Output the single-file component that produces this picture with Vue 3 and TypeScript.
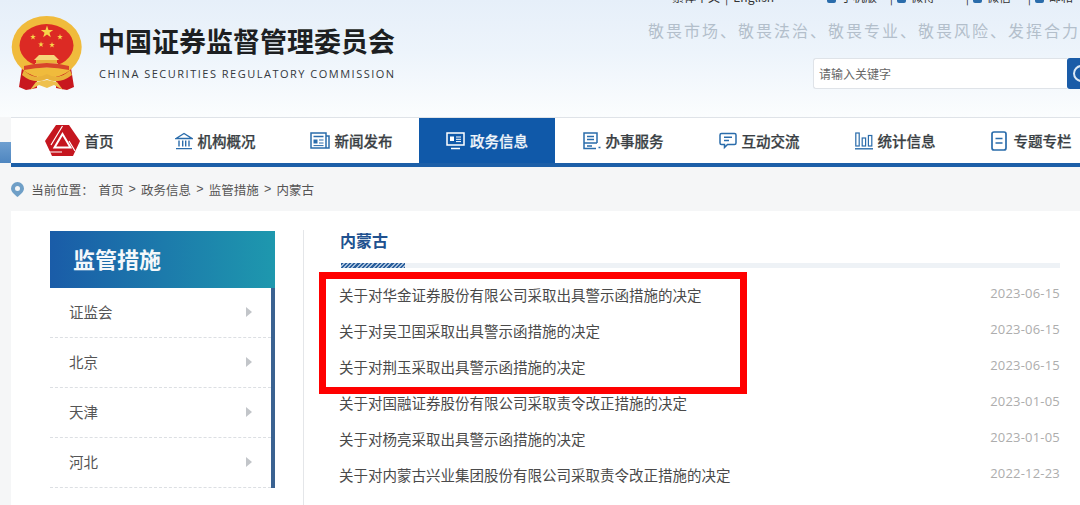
<script setup lang="ts">
interface NavItem {
  label: string
  icon: string
}

const navItems: NavItem[] = [
  { label: '首页', icon: 'logo' },
  { label: '机构概况', icon: 'bank' },
  { label: '新闻发布', icon: 'news' },
  { label: '政务信息', icon: 'screen' },
  { label: '办事服务', icon: 'form' },
  { label: '互动交流', icon: 'chat' },
  { label: '统计信息', icon: 'chart' },
  { label: '专题专栏', icon: 'doc' }
]

const topLinks = [
  { label: '手机版', width: 70 },
  { label: '微博', width: 76 },
  { label: '微信', width: 62 },
  { label: '邮箱', width: 60 }
]

const activeNav = '政务信息'
const crumbs = ['首页', '政务信息', '监管措施', '内蒙古']
const regions = ['证监会', '北京', '天津', '河北']

const notices = [
  { title: '关于对华金证券股份有限公司采取出具警示函措施的决定', date: '2023-06-15' },
  { title: '关于对吴卫国采取出具警示函措施的决定', date: '2023-06-15' },
  { title: '关于对荆玉采取出具警示函措施的决定', date: '2023-06-15' },
  { title: '关于对国融证券股份有限公司采取责令改正措施的决定', date: '2023-01-05' },
  { title: '关于对杨亮采取出具警示函措施的决定', date: '2023-01-05' },
  { title: '关于对内蒙古兴业集团股份有限公司采取责令改正措施的决定', date: '2022-12-23' }
]

const starPoints = (cx: number, cy: number, r: number) => {
  const pts: string[] = []
  for (let i = 0; i < 10; i++) {
    const rad = i % 2 === 0 ? r : r * 0.4
    const a = (Math.PI / 5) * i - Math.PI / 2
    pts.push(`${(cx + rad * Math.cos(a)).toFixed(2)},${(cy + rad * Math.sin(a)).toFixed(2)}`)
  }
  return pts.join(' ')
}
</script>

<template>
  <div class="page">
    <header class="header">
      <svg class="emblem" width="74" height="78" viewBox="10 14 74 78">
        <path d="M22 68 L19 87 L26 90 L37 88 L37 74 Z M71 68 L74 87 L67 90 L56 88 L56 74 Z" fill="#c8171e" />
        <ellipse cx="46.7" cy="47" rx="35" ry="31" fill="#f0bb3c" />
        <ellipse cx="46.5" cy="45.5" rx="27" ry="21.5" fill="#dc2a24" />
        <polygon :points="starPoints(47, 32, 6.5)" fill="#f7d44a" />
        <polygon :points="starPoints(33, 37, 3)" fill="#f7d44a" />
        <polygon :points="starPoints(41, 44.5, 3)" fill="#f7d44a" />
        <polygon :points="starPoints(52, 45, 3)" fill="#f7d44a" />
        <polygon :points="starPoints(60, 37, 3)" fill="#f7d44a" />
        <path d="M39 55 H54 L59 60 H34 Z" fill="#f6d67a" />
        <rect x="36" y="60" width="21" height="3" fill="#e9b23a" />
        <rect x="35" y="63" width="23" height="5" fill="#f3cd68" />
        <path d="M24 66 Q47 60 69 66 L69 70 Q47 65 24 70 Z" fill="#d8452a" />
        <path d="M24 70 Q34 81 47 74 Q59 81 70 70 L72 75 Q59 85 47 79 Q34 85 22 75 Z" fill="#e9b23a" />
        <path d="M30 90 L36 82 L47 80 L57 82 L63 90 L54 85 L47 88 L39 85 Z" fill="#eec04e" />
      </svg>
      <div class="brand">
        <h1 class="brand-cn">中国证券监督管理委员会</h1>
        <p class="brand-en">CHINA SECURITIES REGULATORY COMMISSION</p>
      </div>
      <div class="header-right">
        <div class="top-links">
          <span>繁体中文</span><span>|</span><span>English</span>
          <div class="top-group">
            <span v-for="link in topLinks" :key="link.label" class="top-link" :style="{ width: link.width + 'px' }">
              <i class="top-icon"></i>
              <span>{{ link.label }}</span>
              <span class="top-sep">|</span>
            </span>
          </div>
        </div>
        <p class="slogan">敬畏市场、敬畏法治、敬畏专业、敬畏风险、发挥合力</p>
        <div class="search">
          <div class="search-input">请输入关键字</div>
          <div class="search-btn"><span class="search-ring"></span></div>
        </div>
      </div>
    </header>

    <div class="nav-row">
      <div class="nav-strip"></div>
      <nav class="nav">
        <a v-for="item in navItems" :key="item.label" class="nav-item" :class="{ active: item.label === activeNav }">
          <svg v-if="item.icon === 'logo'" width="35" height="31" viewBox="0 0 35 31">
            <path d="M11 0 H24 L35 16 L28 31 H7 L0 16 Z" fill="#c5161f" />
            <path d="M17.5 9 L25.5 22.5 H9.5 Z" fill="none" stroke="#fff" stroke-width="2" />
            <path d="M17.5 1 L6 20 M24 16 L30 26 M4 27 H17" fill="none" stroke="#fff" stroke-width="1.2" />
          </svg>
          <svg v-else-if="item.icon === 'bank'" width="18" height="18" viewBox="0 0 18 18" fill="none" stroke="#2a6cab" stroke-width="1.4">
            <path d="M1 6.5 L9 1.5 L17 6.5 Z M4 8.5 V14.5 M7.7 8.5 V14.5 M10.7 8.5 V14.5 M14 8.5 V14.5 M1 16.6 H17" />
          </svg>
          <svg v-else-if="item.icon === 'news'" width="20" height="17" viewBox="0 0 20 17" fill="none" stroke="#2a6cab" stroke-width="1.5">
            <path d="M1 1 H16 V16 H1 Z M16 4 H19 V16 H16 M3.5 4.5 H13.5" />
            <rect x="3.5" y="7.5" width="4" height="4" fill="#2a6cab" stroke="none" />
            <path d="M9 8 H13.5 M9 11 H13.5 M3.5 13.6 H13.5" stroke-width="1" />
          </svg>
          <svg v-else-if="item.icon === 'screen'" width="19" height="18" viewBox="0 0 19 18" fill="none" stroke="#fff" stroke-width="1.5">
            <path d="M1 1 H18 V13 H1 Z M5 16.5 H14" />
            <rect x="4" y="4.5" width="4" height="4.5" fill="#fff" stroke="none" />
            <path d="M10 5 H15 M10 7.3 H15 M10 9.6 H15" stroke-width="1" />
          </svg>
          <svg v-else-if="item.icon === 'form'" width="18" height="18" viewBox="0 0 18 18" fill="none" stroke="#2a6cab" stroke-width="1.5">
            <path d="M13 16.5 H1 V1 H14 V11 M1 11 H14 M4 4.6 H11 M4 7.6 H11 M4 14 H9 M15.5 15.5 H17.5" />
          </svg>
          <svg v-else-if="item.icon === 'chat'" width="18" height="18" viewBox="0 0 18 18" fill="none" stroke="#2a6cab" stroke-width="1.5">
            <path d="M2.5 1.5 H15.5 Q17 1.5 17 3 V11 Q17 12.5 15.5 12.5 H8.5 L5.5 15.5 V12.5 H2.5 Q1 12.5 1 11 V3 Q1 1.5 2.5 1.5 Z M5 5.2 H13 M5 8.6 H10" />
          </svg>
          <svg v-else-if="item.icon === 'chart'" width="18" height="18" viewBox="0 0 18 18" fill="none" stroke="#2a6cab" stroke-width="1.2">
            <rect x="0.8" y="1" width="3.4" height="13" />
            <rect x="7.2" y="6" width="3.4" height="8" />
            <rect x="13.4" y="3.5" width="3.4" height="10.5" />
            <path d="M0 16.8 H18" stroke-width="1.4" />
          </svg>
          <svg v-else class="doc-icon" width="16" height="20" viewBox="0 0 16 20" fill="none" stroke="#2a6cab" stroke-width="1.7">
            <path d="M3 1 H13 Q15 1 15 3 V17 Q15 19 13 19 H3 Q1 19 1 17 V3 Q1 1 3 1 Z M4.5 7.5 H11.5 M4.5 12 H11.5" />
          </svg>
          <span class="nav-label">{{ item.label }}</span>
        </a>
      </nav>
    </div>

    <div class="crumbs">
      <svg class="pin" width="13" height="15" viewBox="0 0 13 15">
        <path d="M6.5 0 A6.5 6.5 0 0 1 13 6.5 C13 10 9 13 6.5 15 C4 13 0 10 0 6.5 A6.5 6.5 0 0 1 6.5 0 Z M6.5 4 A2.5 2.5 0 1 0 6.5 9 A2.5 2.5 0 1 0 6.5 4 Z" fill="#6f9fc7" fill-rule="evenodd" />
      </svg>
      <span class="crumb-lead">当前位置：</span>
      <template v-for="(c, i) in crumbs" :key="c">
        <span v-if="i > 0" class="crumb-sep">&gt;</span>
        <span>{{ c }}</span>
      </template>
    </div>

    <section class="panel">
      <aside class="side">
        <h2 class="side-title">监管措施</h2>
        <ul class="side-list">
          <li v-for="r in regions" :key="r" class="side-item">
            <span>{{ r }}</span>
            <i class="arrow"></i>
          </li>
        </ul>
      </aside>
      <main class="main">
        <h3 class="main-title">内蒙古</h3>
        <div class="rule"><div class="rule-hatch"></div></div>
        <ul class="notices">
          <li v-for="n in notices" :key="n.title" class="notice">
            <span>{{ n.title }}</span>
            <span class="date">{{ n.date }}</span>
          </li>
          <li class="highlight" aria-hidden="true"></li>
        </ul>
      </main>
    </section>
  </div>
</template>

<style>
html,
body {
  margin: 0;
  background: #fff;
}
</style>

<style scoped>
.page {
  width: 1080px;
  height: 505px;
  overflow: hidden;
  background: #f5f6f7;
  font-family: "Noto Sans CJK SC", "Noto Sans", sans-serif;
  color: #444;
}

h1, h2, h3, p, ul {
  margin: 0;
  padding: 0;
}

li {
  list-style: none;
}

.header {
  display: flex;
  height: 117px;
  background: linear-gradient(180deg, #e6eff9 0%, #edf4fb 45%, #fbfdfe 100%);
}

.emblem {
  flex-shrink: 0;
  margin: 14px 0 0 10px;
}

.brand {
  width: 300px;
  margin-left: 14px;
  padding-top: 24px;
  flex-shrink: 0;
}

.brand-cn {
  font-size: 27px;
  line-height: 34px;
  font-weight: 700;
  color: #1d1f22;
  white-space: nowrap;
}

.brand-en {
  margin-top: 8px;
  margin-left: 1px;
  font-family: "Open Sans", sans-serif;
  font-size: 11px;
  line-height: 16px;
  letter-spacing: 1.5px;
  color: #33383d;
  white-space: nowrap;
}

.header-right {
  margin-left: 250px;
  width: 432px;
  flex-shrink: 0;
}

.top-links {
  display: flex;
  gap: 5px;
  height: 13px;
  margin: -10px 0 0 24px;
  font-size: 12px;
  line-height: 13px;
  color: #333;
  white-space: nowrap;
}

.top-group {
  display: flex;
  margin-left: 48px;
  flex-shrink: 0;
}

.top-link {
  display: flex;
  align-items: flex-end;
  gap: 5px;
  flex-shrink: 0;
}

.top-icon {
  width: 9px;
  height: 13px;
  border-radius: 2px;
  background: #2a6cab;
}

.top-sep {
  margin-left: auto;
  padding-right: 4px;
}

.slogan {
  margin-top: 18px;
  font-size: 16px;
  line-height: 18px;
  letter-spacing: 2px;
  color: #b3bfcb;
  white-space: nowrap;
}

.search {
  display: flex;
  margin: 19px 0 0 165px;
  height: 31px;
  width: 300px;
}

.search-input {
  width: 254px;
  box-sizing: border-box;
  border: 1px solid #dfe3e8;
  border-right: none;
  border-radius: 3px 0 0 3px;
  background: #fff;
  padding-left: 5px;
  font-size: 12px;
  line-height: 29px;
  color: #666;
}

.search-btn {
  width: 40px;
  background: #1a5ca8;
  border-radius: 3px 0 0 3px;
  overflow: hidden;
  padding: 7px 0 0 6px;
  box-sizing: border-box;
}

.search-ring {
  display: block;
  width: 17px;
  height: 17px;
  box-sizing: border-box;
  border: 2px solid #dbe8f5;
  border-radius: 50%;
}

.nav-row {
  display: flex;
  align-items: flex-end;
}

.nav-strip {
  width: 11px;
  height: 21px;
  flex-shrink: 0;
  background: linear-gradient(180deg, #6e9fd0 0%, #4f86c0 100%);
  margin-bottom: 4px;
}

.nav {
  display: flex;
  flex-shrink: 0;
  width: 1088px;
  height: 45px;
  background: #fff;
  border-top: 1px solid #dfe3e8;
  border-bottom: 4px solid #1c5fa8;
}

.nav-item {
  display: flex;
  align-items: center;
  justify-content: center;
  gap: 5px;
  width: 136px;
  flex-shrink: 0;
  color: #3a3f44;
}

.nav-item.active {
  background: #1059a9;
  color: #f0f5fa;
}

.doc-icon {
  margin-right: 2px;
}

.nav-label {
  font-size: 14.5px;
  font-weight: 500;
  -webkit-text-stroke: 0.25px currentColor;
  white-space: nowrap;
}

.crumbs {
  display: flex;
  align-items: center;
  height: 44px;
  padding-left: 11px;
  font-size: 12.5px;
  color: #555;
  gap: 5.2px;
  white-space: nowrap;
}

.pin {
  margin-right: 2px;
}

.crumb-lead {
  width: 62px;
}

.crumb-sep {
  font-family: "Liberation Sans", sans-serif;
}

.panel {
  display: flex;
  margin-left: 11px;
  height: 294px;
  padding: 19px 0 0 39px;
  box-sizing: border-box;
  background: #fff;
  overflow: hidden;
}

.side {
  width: 225px;
  flex-shrink: 0;
  margin-top: 1px;
}

.side-title {
  height: 57px;
  padding-left: 23px;
  background: linear-gradient(90deg, #1a5ca8 0%, #1e98ae 100%);
  font-size: 22px;
  line-height: 54px;
  font-weight: 700;
  color: #f4f8fb;
}

.side-list {
  border-right: 4px solid #3a6291;
}

.side-item {
  display: flex;
  align-items: center;
  justify-content: space-between;
  height: 50px;
  box-sizing: border-box;
  padding: 0 19px 2px;
  border-bottom: 1px dashed #dcdfe3;
  font-size: 14.5px;
  color: #555;
}

.arrow {
  width: 0;
  height: 0;
  border-left: 6px solid #c2c5c9;
  border-top: 5px solid transparent;
  border-bottom: 5px solid transparent;
}

.main {
  flex: 1;
  margin-left: 28px;
  padding: 0 20px 0 35px;
  border-left: 1px solid #e4e6e9;
}

.main-title {
  margin: -1px 0 0 1px;
  font-size: 16px;
  line-height: 22px;
  font-weight: 700;
  color: #20518f;
}

.rule {
  margin-top: 12px;
  height: 5px;
  margin-left: 2px;
  background: #eef2f6;
}

.rule-hatch {
  width: 64px;
  height: 5px;
  background: repeating-linear-gradient(135deg, #2b5f9c 0 1.5px, #a9c1dc 1.5px 3px);
}

.notices {
  position: relative;
  margin-top: 9px;
}

.notice {
  display: flex;
  justify-content: space-between;
  height: 36px;
  font-size: 14.5px;
  line-height: 36px;
  color: #4a4a4a;
  white-space: nowrap;
}

.date {
  font-family: "Open Sans", sans-serif;
  font-size: 13px;
  letter-spacing: 0.2px;
  color: #adadad;
  line-height: 32px;
}

.highlight {
  position: absolute;
  top: -5px;
  left: -20px;
  width: 428px;
  height: 122px;
  box-sizing: border-box;
  border: 7px solid #f00;
}
</style>
